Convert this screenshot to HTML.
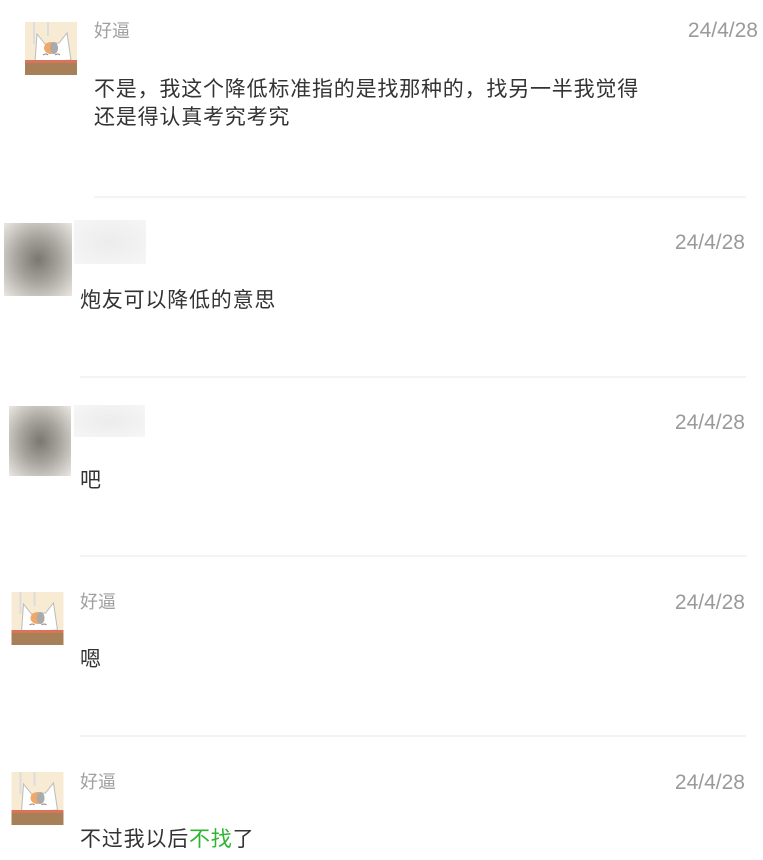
<!DOCTYPE html>
<html><head><meta charset="utf-8">
<style>
body{margin:0;width:763px;height:860px;background:#fff;position:relative;overflow:hidden;font-family:"Liberation Sans","Noto Sans CJK SC",sans-serif;}
.a{position:absolute}
.name{position:absolute;font-size:18px;color:#a0a0a0;line-height:20px}
.date{position:absolute;right:5px;font-size:21px;color:#9a9a9a;line-height:22px;font-family:"Liberation Sans",sans-serif}
.msg{position:absolute;font-size:21px;color:#333;line-height:28px;letter-spacing:0.8px;white-space:nowrap}
.hr{position:absolute;height:2px;background:#f3f3f3;right:17px}
.blur{position:absolute;overflow:hidden}
</style></head><body>
<svg width="0" height="0" style="position:absolute"><defs>
<symbol id="cat" viewBox="0 0 52 53">
<rect width="52" height="53" fill="#f7ecd3"/>
<rect x="8" y="0" width="2" height="22" fill="#ddd"/>
<rect x="22" y="0" width="2" height="14" fill="#ddd"/>
<path d="M10 40 L12 12 L20 22 L34 21 L42 11 L46 38 Z" fill="#fff" stroke="#bbb" stroke-width="1"/>
<ellipse cx="26" cy="26" rx="7" ry="6" fill="#f0a868"/>
<ellipse cx="29" cy="26" rx="4" ry="6" fill="#aaa"/>
<path d="M18 33 q3 -2 5 0 M30 33 q3 -2 5 0" stroke="#888" fill="none" stroke-width="1"/>
<rect x="0" y="38" width="52" height="3" fill="#d9735a"/>
<rect x="0" y="41" width="52" height="12" fill="#a88058"/>
</symbol></defs></svg>

<svg class="a" style="left:25px;top:22px" width="52" height="53"><use href="#cat"/></svg>
<div class="name" style="left:94px;top:21px">好逼</div>
<div class="date" style="top:20px">24/4/28</div>
<div class="msg" style="left:94px;top:76px">不是，我这个降低标准指的是找那种的，找另一半我觉得<br>还是得认真考究考究</div>
<div class="hr" style="left:94px;top:196px"></div>

<div class="blur" style="left:4px;top:223px;width:68px;height:73px;background:radial-gradient(ellipse at 50% 50%,#7a7670 0%,#a8a49e 45%,#ebe8e4 100%)"></div>
<div class="blur" style="left:74px;top:220px;width:72px;height:44px;background:radial-gradient(ellipse at 50% 50%,#ececec,#f6f6f6)"></div>
<div class="date" style="top:232px;right:18px">24/4/28</div>
<div class="msg" style="left:80px;top:287px">炮友可以降低的意思</div>
<div class="hr" style="left:80px;top:376px"></div>

<div class="blur" style="left:9px;top:406px;width:62px;height:70px;background:radial-gradient(ellipse at 50% 50%,#7a7670 0%,#a8a49e 45%,#ebe8e4 100%)"></div>
<div class="blur" style="left:74px;top:405px;width:71px;height:32px;background:radial-gradient(ellipse at 50% 50%,#ececec,#f6f6f6)"></div>
<div class="date" style="top:412px;right:18px">24/4/28</div>
<div class="msg" style="left:80px;top:467px">吧</div>
<div class="hr" style="left:80px;top:555px"></div>

<svg class="a" style="left:11px;top:592px" width="53" height="53"><use href="#cat"/></svg>
<div class="name" style="left:80px;top:592px">好逼</div>
<div class="date" style="top:592px;right:18px">24/4/28</div>
<div class="msg" style="left:80px;top:646px">嗯</div>
<div class="hr" style="left:80px;top:735px"></div>

<svg class="a" style="left:11px;top:772px" width="53" height="53"><use href="#cat"/></svg>
<div class="name" style="left:80px;top:772px">好逼</div>
<div class="date" style="top:772px;right:18px">24/4/28</div>
<div class="msg" style="left:80px;top:826px">不过我以后<span style="color:#2fb52f">不找</span>了</div>
</body></html>
